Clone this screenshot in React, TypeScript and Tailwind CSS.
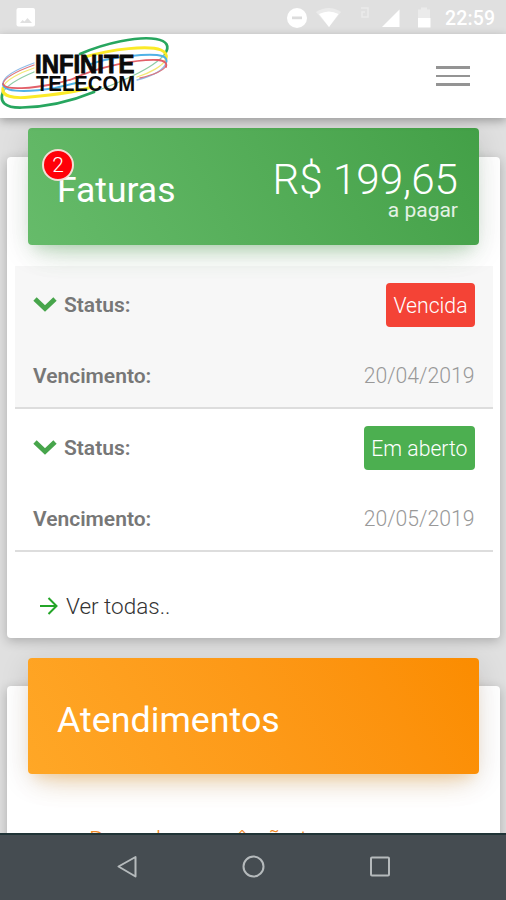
import React from "react";

function StatusBar() {
  return (
    <div className="h-[34px] shrink-0 bg-[#e0e0e0]">
      <svg width="506" height="34" viewBox="0 0 506 34" className="block">
        <rect x="16.5" y="8" width="18.5" height="18.5" rx="2" fill="#fff" />
        <path d="M20 23l2.500-3 2 1.500 3-3.500 4.500 5z" fill="#e0e0e0" />
        <circle cx="297" cy="18" r="10" fill="#fff" />
        <rect x="292" y="16.500" width="10" height="2.700" fill="#dcdcdc" />
        <path d="M316 12Q329 4 341 12L329 27z" fill="#ebebeb" />
        <path d="M319 14Q329 9 338.500 14L329 27z" fill="#fff" />
        <path d="M361 8h7v9h-6v-5h3" fill="none" stroke="#eaeaea" strokeWidth="1.500" />
        <path d="M382 27L399.500 9.500V27z" fill="#fff" />
        <path d="M418 9.500h3v-2h6v2h3V18h-12z" fill="#ebebeb" />
        <path d="M418 18h12.500v9.500H418z" fill="#fff" />
        <text x="445" y="25" fontSize="19.500" fontWeight="500" fill="#fff" textLength="50" fontFamily="Roboto, sans-serif">22:59</text>
      </svg>
    </div>
  );
}

function Logo() {
  return (
    <svg width="172" height="84" viewBox="0 0 172 84" className="block">
      <g fill="none" strokeLinecap="round">
        <g strokeWidth="1.300">
          <path d="M34 29C20 34 4 41 3 49M166 29C164 36 152 42 137 46" stroke="#8fbbe8" />
          <path d="M34 31C20 36 4 43 3 50M166 32C163 37 153 41 140 44" stroke="#dc7780" />
          <path d="M34 34C22 38 4 46 3 54M166 25C163 32 150 39 137 43" stroke="#f3e874" />
          <path d="M34 38C22 43 8 50 3 58M166 18C159 31 125 47 93 58" stroke="#8dcca4" />
        </g>
        <path d="M80 20C105 9 138 2 156 5C167 7 170 12 165 20" stroke="#27a65f" strokeWidth="2.700" />
        <path d="M3 58C-1 68 5 74 22 73.500C46 73 72 67 94 58" stroke="#27a65f" strokeWidth="2.700" />
        <path d="M85 23C112 15 149 11 161 16Q168 19 166 25" stroke="#fbea28" strokeWidth="2.900" />
        <path d="M3 54C1 62 13 65 30 63C53 61 76 58 92 53" stroke="#fbea28" strokeWidth="2.900" />
        <path d="M88 31C112 22 152 19 162 22Q168 24 166 29M3 50C3 59 30 58 55 54L76 49" stroke="#50b2e6" strokeWidth="2" />
        <path d="M70 46C99 32 139 25 158 26Q168 27 166 33M3 50C5 57 34 54 54 50L80 43" stroke="#e25f68" strokeWidth="1.800" />
      </g>
      <g fontFamily="'Liberation Sans', Arial, sans-serif" fill="#0a0a0a" fontWeight="700">
        <text x="35" y="38.500" fontSize="26" stroke="#0a0a0a" strokeWidth=".9" textLength="99.500" lengthAdjust="spacingAndGlyphs">INFINITE</text>
        <text x="36" y="57" fontSize="22.500" textLength="99" lengthAdjust="spacingAndGlyphs">TELECOM</text>
      </g>
    </svg>
  );
}

function Header() {
  return (
    <header className="relative z-10 flex h-[84px] shrink-0 items-start justify-between bg-white pr-9 shadow-[0_3px_9px_rgba(0,0,0,0.3)]">
      <Logo />
      <div className="mt-8 flex w-[34px] flex-col gap-[6px]">
        <div className="h-[2.500px] bg-[#949494]" />
        <div className="h-[2.500px] bg-[#949494]" />
        <div className="h-[2.500px] bg-[#949494]" />
      </div>
    </header>
  );
}

interface InvoiceProps {
  label: string;
  date: string;
  overdue?: boolean;
}

function Invoice({ label, date, overdue }: InvoiceProps) {
  return (
    <div className={`ml-2 mr-[7px] h-[143px] border-b-2 border-[#dddddd] pl-[18px] pr-[18.500px] pt-[17px] ${overdue ? "bg-[#f7f7f7]" : "bg-white"}`}>
      <div className="flex h-11 items-center justify-between">
        <div className="flex items-center font-semibold text-[#777]">
          <svg width="24" height="18" viewBox="0 0 24 18" className="mr-[7px]">
            <path d="M2 3L12 12.500L22 3" fill="none" stroke="#47a54b" strokeWidth="4.800" />
          </svg>
          <span className="mt-[2px] text-[21px]">Status:</span>
        </div>
        <div className={`flex h-11 items-center rounded-[4px] px-[7px] pt-px text-[21.200px] font-light text-white ${overdue ? "bg-[#f44336]" : "bg-[#4caf50]"}`}>{label}</div>
      </div>
      <div className="mt-[34px] flex items-center justify-between leading-[30px]">
        <span className="text-[21px] font-semibold text-[#777]">Vencimento:</span>
        <span className="text-[21.200px] font-light text-[#999]">{date}</span>
      </div>
    </div>
  );
}

function Invoices() {
  return (
    <section className="mx-[7px] mt-[39px] h-[481px] w-[493px] shrink-0 rounded-[4px] bg-white shadow-[0_3px_12px_rgba(0,0,0,0.24)]">
      <div className="relative -mt-[29px] ml-[21px] flex h-[117px] w-[451px] justify-between rounded-[4px] bg-linear-60 from-[#66bb6a] to-[#43a047] px-[21px] text-white shadow-[0_18px_30px_-15px_rgba(76,175,80,0.28),0_6px_30px_rgba(0,0,0,0.12),0_10px_12px_-7px_rgba(76,175,80,0.2)]">
        <h2 className="ml-[8px] mt-[41px] text-[35.500px] leading-[42px]">Faturas</h2>
        <div className="absolute left-[14px] top-[21px] flex h-[32px] w-[32px] items-center justify-center rounded-full border-2 border-[#f4ddd5] bg-[#ff0008] text-[21px] font-light leading-none">2</div>
        <div className="mt-[28px] text-right font-light">
          <div className="text-[42.200px] leading-[48px]">R$ 199,65</div>
          <div className="-mt-[6px] text-[21px] font-normal leading-[24px] text-white/85">a pagar</div>
        </div>
      </div>
      <div className="h-[21px]" />
      <Invoice label="Vencida" date="20/04/2019" overdue />
      <Invoice label="Em aberto" date="20/05/2019" />
      <div className="flex h-[108px] items-center pl-[32px] text-[22.500px] font-light text-[#333]">
        <svg width="20" height="20" viewBox="0 0 20 20" className="mr-[7px]">
          <path d="M1 10H17.500M9.500 2L17.500 10L9.500 18" fill="none" stroke="#24a528" strokeWidth="2" />
        </svg>
        <span className="pt-[2px]">Ver todas..</span>
      </div>
    </section>
  );
}

function Support() {
  return (
    <section className="mx-[7px] mt-[48px] h-[180px] w-[493px] shrink-0 rounded-[4px] bg-white shadow-[0_3px_12px_rgba(0,0,0,0.24)]">
      <div className="-mt-[28px] ml-[21px] flex h-[116px] w-[451px] rounded-[4px] bg-linear-60 from-[#ffa726] to-[#fb8c00] px-[29px] text-white shadow-[0_18px_30px_-15px_rgba(255,152,0,0.28),0_6px_30px_rgba(0,0,0,0.12),0_10px_12px_-7px_rgba(255,152,0,0.2)]">
        <h2 className="mt-[41px] text-[35.800px] leading-[42px]">Atendimentos</h2>
      </div>
      <p className="ml-[82px] mt-[51px] text-[24.300px] font-light leading-[30px] text-[#f18a27]">Desculpe, você não tem</p>
    </section>
  );
}

function Navigation() {
  return (
    <nav className="relative z-10 h-[67px] shrink-0 border-t-2 border-[#203437] bg-[#454c51]">
      <svg width="506" height="65" viewBox="0 835 506 65" fill="none" stroke="#b5babc" strokeWidth="2" className="block">
        <path d="M118.500 866.500L135.500 857V876.500z" strokeLinejoin="round" />
        <circle cx="253.500" cy="866.500" r="10" />
        <rect x="371" y="857.500" width="18" height="18" rx="1" />
      </svg>
    </nav>
  );
}

export default function App() {
  return (
    <main className="flex h-[900px] w-[506px] flex-col overflow-hidden bg-[#e0e0e0] font-['Roboto',sans-serif]">
      <StatusBar />
      <Header />
      <div className="flex h-[715px] shrink-0 flex-col overflow-hidden">
        <Invoices />
        <Support />
      </div>
      <Navigation />
    </main>
  );
}
